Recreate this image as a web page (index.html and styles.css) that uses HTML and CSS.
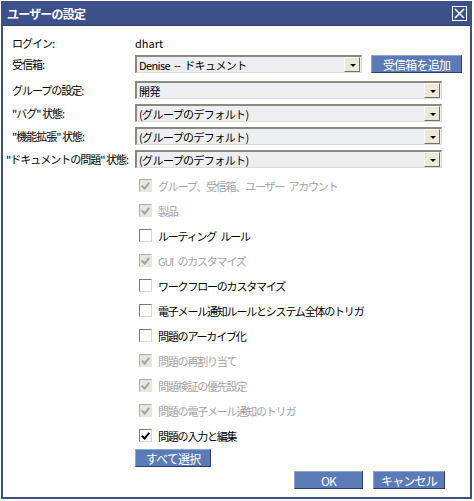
FILE: index.html
```html
<!DOCTYPE html>
<html>
<head>
  <title>ユーザーの設定</title>
  <link rel="stylesheet" href="styles.css">
</head>
<body>
  <div class="window">
    <div class="titleBar">
      <span class="title">ユーザーの設定</span>
      <span class="closeBox">
        <svg width="11" height="11" viewBox="0 0 11 11"><path d="M1 1L10 10M10 1L1 10" stroke="#fff" stroke-width="1.6"/></svg>
      </span>
    </div>

    <div class="content">
      <div class="form">
        <div class="label login">ログイン:</div>
        <div class="value login">dhart</div>

        <div class="label inbox">受信箱:</div>
        <div class="value inboxRow">
          <div class="select short"><span>Denise -- ドキュメント</span><i class="arrow"></i></div>
          <button class="btn addBtn">受信箱を追加</button>
        </div>

        <div class="label">グループの設定:</div>
        <div class="value"><div class="select"><span>開発</span><i class="arrow"></i></div></div>

        <div class="label">"バグ" 状態:</div>
        <div class="value"><div class="select"><span>(グループのデフォルト)</span><i class="arrow"></i></div></div>

        <div class="label">"機能拡張" 状態:</div>
        <div class="value"><div class="select"><span>(グループのデフォルト)</span><i class="arrow"></i></div></div>

        <div class="label wide">"ドキュメントの問題" 状態:</div>
        <div class="value"><div class="select"><span>(グループのデフォルト)</span><i class="arrow"></i></div></div>
      </div>

      <ul class="perms">
        <li class="disabled"><i class="box checked"></i>グループ、受信箱、ユーザー アカウント</li>
        <li class="disabled"><i class="box checked"></i>製品</li>
        <li><i class="box"></i>ルーティング ルール</li>
        <li class="disabled"><i class="box checked"></i>GUI のカスタマイズ</li>
        <li><i class="box"></i>ワークフローのカスタマイズ</li>
        <li><i class="box"></i>電子メール通知ルールとシステム全体のトリガ</li>
        <li><i class="box"></i>問題のアーカイブ化</li>
        <li class="disabled"><i class="box checked"></i>問題の再割り当て</li>
        <li class="disabled"><i class="box checked"></i>問題検証の優先設定</li>
        <li class="disabled"><i class="box checked"></i>問題の電子メール通知のトリガ</li>
        <li><i class="box checked"></i>問題の入力と編集</li>
      </ul>

      <button class="btn selectAll">すべて選択</button>

      <div class="actions">
        <button class="btn okBtn">OK</button>
        <button class="btn cancelBtn">キャンセル</button>
      </div>
    </div>
  </div>
</body>
</html>
```

FILE: styles.css
```css
body { margin: 0; background: #fff; font-family: "Noto Sans CJK JP", "Liberation Sans", sans-serif; font-size: 11px; color: #000; }
.window {
  margin: 1px 0 0 1px;
  width: 467px;
  height: 496px;
  border: 2px solid #3d5085;
  border-top: none;
  display: flex;
  flex-direction: column;
}
.titleBar {
  height: 24px;
  background: #3c5189;
  display: flex;
  align-items: center;
  justify-content: space-between;
  padding: 0 3px 0 4px;
  border-bottom: 1px solid #2e3f70;
}
.title { color: #fff; font-weight: bold; font-size: 12px; letter-spacing: -0.8px; }
.closeBox {
  width: 13px;
  height: 13px;
  border: 1px solid #fff;
  display: flex;
  align-items: center;
  justify-content: center;
  margin-top: 1px;
}
.content { padding: 11px 0 0 0; flex: 1; display: flex; flex-direction: column; }
.form {
  display: grid;
  grid-template-columns: 132px 340px;
  row-gap: 5px;
  align-items: start;
}
.label { padding-left: 9px; letter-spacing: -1px; height: 18px; line-height: 18px; white-space: nowrap; }
.label.wide { padding-left: 3px; }
.value { height: 18px; line-height: 18px; display: flex; align-items: center; }
.login { height: 13px; line-height: 13px; }
.inbox { height: 21px; }
.inboxRow { gap: 9px; height: 21px; align-items: flex-start; }
.select {
  box-sizing: border-box;
  width: 307px;
  height: 18px;
  flex: none;
  background: #eceef2;
  border-top: 2px solid #8a8a7e;
  border-left: 2px solid #8a8a7e;
  border-right: 1px solid #dcdcd4;
  border-bottom: 1px solid #dcdcd4;
  display: flex;
  align-items: center;
  justify-content: space-between;
  padding-left: 2px;
  letter-spacing: -0.6px;
  word-spacing: 2px;
  overflow: hidden;
}
.select.short { width: 227px; }
.arrow {
  box-sizing: border-box;
  width: 16px;
  height: 15px;
  background: #ece9d8;
  border-top: 1px solid #fff;
  border-left: 1px solid #fff;
  border-right: 1px solid #716f64;
  border-bottom: 1px solid #716f64;
  margin-right: 1px;
  position: relative;
}
.arrow::after {
  content: "";
  position: absolute;
  left: 5px;
  top: 6px;
  border-left: 3px solid transparent;
  border-right: 3px solid transparent;
  border-top: 3px solid #000;
}
.btn {
  font-family: inherit;
  font-size: 12px;
  color: #fff;
  background: #5b7bb6;
  border-top: 1px solid #8ea6d2;
  border-left: 1px solid #8ea6d2;
  border-right: 1px solid #2d3f6f;
  border-bottom: 1px solid #2d3f6f;
  padding: 0;
  height: 18px;
  line-height: 15px;
  letter-spacing: -0.8px;
  flex: none;
}
.addBtn { width: 91px; }
.perms { list-style: none; margin: 5px 0 0 0; padding: 0 0 0 136px; }
.perms li { height: 25px; display: flex; align-items: center; letter-spacing: -1.2px; word-spacing: 3px; white-space: pre; }
.perms li.disabled { color: #a3a3a3; }
.box {
  box-sizing: border-box;
  width: 13px;
  height: 13px;
  border: 1px solid #1c5180;
  border-color: #7a7a7a #d8d8d8 #d8d8d8 #7a7a7a;
  background: #fff;
  margin-right: 6px;
  position: relative;
  flex: none;
}
.disabled .box { background: #e6e6e0; border-color: #b0b0a8 #e8e8e0 #e8e8e0 #b0b0a8; }
.box.checked::after {
  content: "";
  position: absolute;
  left: 3px;
  top: 1px;
  width: 3px;
  height: 6px;
  border-right: 2px solid #000;
  border-bottom: 2px solid #000;
  transform: rotate(40deg);
}
.disabled .box.checked::after { border-color: #a3a3a3; }
.selectAll { width: 76px; margin: 1px 0 0 132px; align-self: flex-start; }
.actions { display: flex; gap: 10px; margin: 4px 0 0 291px; }
.okBtn { width: 69px; }
.cancelBtn { width: 72px; }
```
